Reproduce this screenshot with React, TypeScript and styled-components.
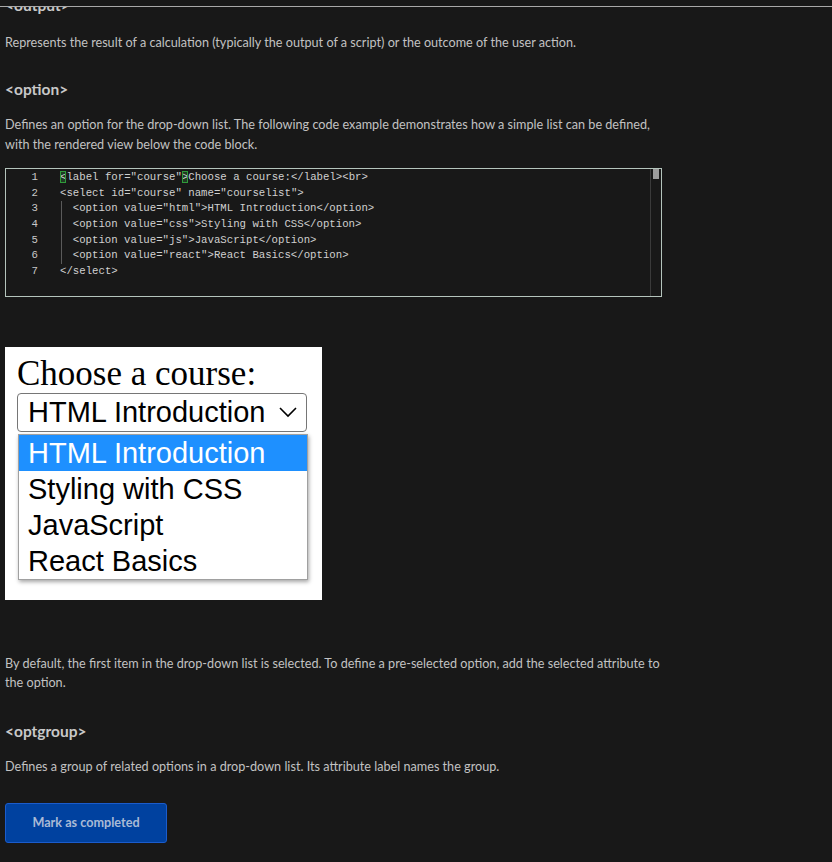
import styled, { createGlobalStyle } from 'styled-components';

const GlobalStyle = createGlobalStyle`
  html, body {
    margin: 0;
    padding: 0;
    background: #181818;
  }
  body {
    font-family: Lato, "Noto Sans", sans-serif;
    color: #c4c4c4;
  }
`;

const Page = styled.div`
  width: 832px;
  height: 862px;
  overflow: hidden;
  background: #181818;
`;

const TopBar = styled.div`
  height: 6px;
  border-bottom: 1px solid #a8a8a8;
`;

const Viewport = styled.div`
  overflow: hidden;
  padding: 0 5px;
`;

const Heading = styled.h3<{ $top?: number }>`
  margin: ${(p) => p.$top ?? 0}px 0 0;
  font-size: 15.5px;
  font-weight: 700;
  line-height: 20px;
  color: #c8c8c8;
`;

const Paragraph = styled.p<{ $top?: number }>`
  margin: ${(p) => p.$top ?? 0}px 0 0;
  max-width: 662px;
  font-size: 12.65px;
  line-height: 19.3px;
  color: #c2c2c2;
`;

const CodeBox = styled.div`
  margin-top: 14px;
  width: 655px;
  height: 127px;
  border: 1px solid #b4c4bc;
  display: flex;
  box-sizing: content-box;
`;

const Gutter = styled.div`
  width: 32px;
  padding-top: 1px;
  text-align: right;
  font-family: "Liberation Mono", "DejaVu Sans Mono", monospace;
  font-size: 10.7px;
  line-height: 15.7px;
  color: #c8c8c8;
`;

const Lines = styled.div`
  flex: 1;
  padding: 1px 0 0 22px;
  font-family: "Liberation Mono", "DejaVu Sans Mono", monospace;
  font-size: 10.7px;
  line-height: 15.7px;
  color: #d0d0d0;
  white-space: pre;
`;

const CodeLine = styled.div<{ $indent?: boolean }>`
  position: relative;
  padding-left: ${(p) => (p.$indent ? '12.8px' : '0')};
  ${(p) =>
    p.$indent &&
    `&::before {
      content: '';
      position: absolute;
      left: 1px;
      top: 0;
      bottom: 0;
      border-left: 1px solid #5a5a5a;
    }`}
`;

const Match = styled.span`
  outline: 1px solid #2f9a3a;
  outline-offset: -1px;
  background: #1f3a22;
`;

const ScrollTrack = styled.div`
  width: 10px;
  border-left: 1px solid #3a3a3a;
  display: flex;
  justify-content: center;
`;

const ScrollThumb = styled.div`
  width: 6px;
  height: 10px;
  background: #9c9c9c;
`;

const Preview = styled.div`
  margin-top: 50px;
  width: 317px;
  height: 253px;
  background: #ffffff;
  box-sizing: border-box;
  padding: 7px 0 0 12px;
`;

const Label = styled.div`
  font-family: "Liberation Serif", "Times New Roman", serif;
  font-size: 35px;
  line-height: 39px;
  color: #000;
`;

const SelectBox = styled.div`
  width: 290px;
  height: 39px;
  box-sizing: border-box;
  border: 1px solid #767676;
  border-radius: 4px;
  display: flex;
  align-items: center;
  justify-content: space-between;
  padding: 0 8px 0 10px;
  font-family: "Liberation Sans", Arial, sans-serif;
  font-size: 29px;
  color: #000;
`;

const DropList = styled.div`
  margin: 2px 0 0 1px;
  width: 290px;
  box-sizing: border-box;
  border: 1px solid #a0a0a0;
  box-shadow: 1px 2px 4px rgba(0, 0, 0, 0.35);
  background: #fff;
`;

const DropOption = styled.div<{ $active?: boolean }>`
  height: 36px;
  line-height: 36px;
  padding-left: 9px;
  font-family: "Liberation Sans", Arial, sans-serif;
  font-size: 29px;
  color: ${(p) => (p.$active ? '#ffffff' : '#000000')};
  background: ${(p) => (p.$active ? '#1e90ff' : '#ffffff')};
`;

const Button = styled.button`
  margin-top: 26px;
  width: 162px;
  height: 40px;
  border: 1px solid #1b5ccc;
  border-radius: 3px;
  background: #00419f;
  color: #a9bad6;
  font-family: Lato, "Noto Sans", sans-serif;
  font-size: 12.65px;
  font-weight: 700;
  cursor: pointer;
`;

const Chevron = () => (
  <svg width="20" height="12" viewBox="0 0 20 12" fill="none">
    <path d="M2 2l8 8 8-8" stroke="#000" strokeWidth="1.6" />
  </svg>
);

const courses = ['HTML Introduction', 'Styling with CSS', 'JavaScript', 'React Basics'];

export default function App() {
  return (
    <Page>
      <GlobalStyle />
      <TopBar />
      <Viewport>
        <Heading $top={-12}>&lt;output&gt;</Heading>
        <Paragraph $top={18}>
          Represents the result of a calculation (typically the output of a script) or the outcome of the user action.
        </Paragraph>
        <Heading $top={27}>&lt;option&gt;</Heading>
        <Paragraph $top={16}>
          Defines an option for the drop-down list. The following code example demonstrates how a simple list can be defined,
          with the rendered view below the code block.
        </Paragraph>
        <CodeBox>
          <Gutter>
            {[1, 2, 3, 4, 5, 6, 7].map((n) => (
              <div key={n}>{n}</div>
            ))}
          </Gutter>
          <Lines>
            <CodeLine>
              <Match>&lt;</Match>label for="course"<Match>&gt;</Match>Choose a course:&lt;/label&gt;&lt;br&gt;
            </CodeLine>
            <CodeLine>&lt;select id="course" name="courselist"&gt;</CodeLine>
            <CodeLine $indent>&lt;option value="html"&gt;HTML Introduction&lt;/option&gt;</CodeLine>
            <CodeLine $indent>&lt;option value="css"&gt;Styling with CSS&lt;/option&gt;</CodeLine>
            <CodeLine $indent>&lt;option value="js"&gt;JavaScript&lt;/option&gt;</CodeLine>
            <CodeLine $indent>&lt;option value="react"&gt;React Basics&lt;/option&gt;</CodeLine>
            <CodeLine>&lt;/select&gt;</CodeLine>
          </Lines>
          <ScrollTrack>
            <ScrollThumb />
          </ScrollTrack>
        </CodeBox>
        <Preview>
          <Label>Choose a course:</Label>
          <SelectBox>
            <span>HTML Introduction</span>
            <Chevron />
          </SelectBox>
          <DropList>
            {courses.map((c, i) => (
              <DropOption key={c} $active={i === 0}>
                {c}
              </DropOption>
            ))}
          </DropList>
        </Preview>
        <Paragraph $top={54}>
          By default, the first item in the drop-down list is selected. To define a pre-selected option, add the selected attribute to
          the option.
        </Paragraph>
        <Heading $top={29}>&lt;optgroup&gt;</Heading>
        <Paragraph $top={16}>
          Defines a group of related options in a drop-down list. Its attribute label names the group.
        </Paragraph>
        <Button>Mark as completed</Button>
      </Viewport>
    </Page>
  );
}
